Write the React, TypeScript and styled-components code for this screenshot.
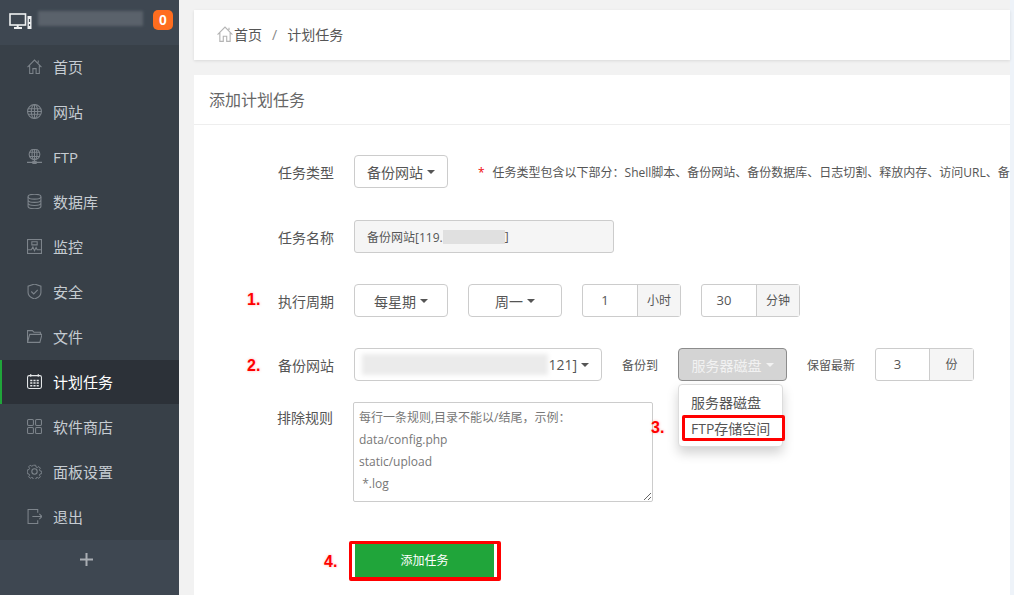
import React from 'react'
import styled, { createGlobalStyle } from 'styled-components'

const GlobalStyle = createGlobalStyle`
  html, body {
    margin: 0;
    padding: 0;
    height: 100%;
    overflow: hidden;
    background: #f2f2f2;
    font-family: "Open Sans", "Noto Sans CJK SC", sans-serif;
  }
  * { box-sizing: border-box; }
`

const icons: Record<string, React.ReactNode> = {
  home: <path d="M1.500 8.500 8 2l6.500 6.500M3.500 7v7.500h3V10h3v4.500h3V7M11.500 2.500v2" />,
  globe: (
    <>
      <circle cx="8" cy="8" r="6.500" />
      <ellipse cx="8" cy="8" rx="3" ry="6.500" />
      <path d="M8 1.500v13M2 5.500h12M2 10.500h12M1.500 8h13" />
    </>
  ),
  ftp: (
    <>
      <circle cx="8" cy="6" r="5" />
      <ellipse cx="8" cy="6" rx="2.300" ry="5" />
      <path d="M8 1v10M3.500 4h9M3.500 8h9M.5 13.500h15M8 11v2.500" />
      <rect x="6.500" y="12.500" width="3" height="2" fill="#7d848b" />
    </>
  ),
  db: (
    <>
      <ellipse cx="8" cy="3.500" rx="6" ry="2.300" />
      <path d="M2 3.500v9c0 1.300 2.700 2.300 6 2.300s6-1 6-2.300v-9M2 6.500c0 1.300 2.700 2.300 6 2.300s6-1 6-2.300M2 9.500c0 1.300 2.700 2.300 6 2.300s6-1 6-2.300" />
    </>
  ),
  monitor: (
    <>
      <rect x="1.500" y="1.500" width="13" height="13" />
      <path d="M2 11h3l1.500-2.500L8 12l1.500-3 1 2H14M5.500 3.500h5v3h-5z" />
    </>
  ),
  shield: <path d="M8 1 2 3v6c0 3 3 5 6 6 3-1 6-3 6-6V3zM5 8l2.300 2.300L11 6.500" />,
  folder: <path d="M1.500 13.500v-11h4.500l1.500 1.500h6v2M1.500 13.500h11.500l2-7.500H3.500z" />,
  calendar: (
    <>
      <rect x="1.500" y="2.500" width="13" height="12" rx="1.500" />
      <path d="M4.500 1v2.500M11.500 1v2.500" />
      <path d="M4 7h8M4 9.500h8M4 12h8" strokeWidth="1.400" strokeDasharray="2 1" />
    </>
  ),
  grid: (
    <>
      <rect x="1.500" y="1.500" width="5.500" height="5.500" rx="1" />
      <rect x="9" y="1.500" width="5.500" height="5.500" rx="1" />
      <rect x="1.500" y="9" width="5.500" height="5.500" rx="1" />
      <rect x="9" y="9" width="5.500" height="5.500" rx="1" />
    </>
  ),
  gear: (
    <>
      <circle cx="8" cy="8" r="2.500" />
      <path d="m6.800 1.500h2.400l.4 1.800 1.300.6 1.600-1 1.600 1.700-1 1.500.6 1.300 1.800.4v2.400l-1.800.4-.6 1.300 1 1.500-1.600 1.700-1.600-1-1.300.6-.4 1.800H6.800l-.4-1.800-1.300-.6-1.600 1-1.600-1.700 1-1.500-.6-1.300-1.800-.4V6.400l1.800-.4.6-1.300-1-1.500 1.600-1.700 1.600 1 1.300-.6z" transform="translate(.8 .8) scale(.9)" />
    </>
  ),
  logout: <path d="M11 4.500V1.500H2v13h9v-3M6 8h9M12.500 5.500 15 8l-2.500 2.500" />,
}

const menu = [
  { icon: 'home', label: '首页' },
  { icon: 'globe', label: '网站' },
  { icon: 'ftp', label: 'FTP' },
  { icon: 'db', label: '数据库' },
  { icon: 'monitor', label: '监控' },
  { icon: 'shield', label: '安全' },
  { icon: 'folder', label: '文件' },
  { icon: 'calendar', label: '计划任务', active: true },
  { icon: 'grid', label: '软件商店' },
  { icon: 'gear', label: '面板设置' },
  { icon: 'logout', label: '退出' },
]

export default function App() {
  return (
    <>
      <GlobalStyle />
      <Page>
        <Sidebar>
          <SideHeader>
            <svg width="23" height="17" viewBox="0 0 23 17" fill="none" stroke="#eef0f1">
              <rect x="1" y="1" width="15.500" height="11" strokeWidth="1.600" />
              <path d="M5 15h8" strokeWidth="2" />
              <path d="M8.700 12v2" strokeWidth="2" />
              <rect x="18.500" y="3" width="4" height="13" fill="#eef0f1" stroke="none" />
              <path d="M20.500 6v3M20.500 11v2" stroke="#4a525b" strokeWidth="1.200" />
            </svg>
            <BlurName />
            <Badge>0</Badge>
          </SideHeader>
          <Nav>
            {menu.map(item => (
              <NavItem key={item.label} $active={item.active}>
                <NavIcon viewBox="1 1 14 14" $active={item.active}>
                  {icons[item.icon]}
                </NavIcon>
                {item.label}
              </NavItem>
            ))}
          </Nav>
          <SideFooter>
            <svg width="13" height="13" viewBox="0 0 13 13" fill="#a9aeb3">
              <path d="M5.500 0h2v5.500H13v2H7.500V13h-2V7.500H0v-2h5.500z" />
            </svg>
          </SideFooter>
        </Sidebar>
        <Main>
          <Crumbs>
            <svg width="16" height="16" viewBox="1 1 14 14" fill="none" stroke="#b4b4b4">
              {icons.home}
            </svg>
            <CrumbHome>首页</CrumbHome>
            <CrumbSep>/</CrumbSep>
            <span>计划任务</span>
          </Crumbs>
          <Panel>
            <PanelTitle>添加计划任务</PanelTitle>
            <Form>
              <Row>
                <Label>任务类型</Label>
                <Dropdown $w={94}>
                  备份网站<Caret />
                </Dropdown>
                <Note>
                  <Star>*</Star>任务类型包含以下部分：Shell脚本、备份网站、备份数据库、日志切割、释放内存、访问URL、备
                </Note>
              </Row>
              <Row $gap={31}>
                <Label>任务名称</Label>
                <NameField>
                  备份网站[119.<NameBlur />]
                </NameField>
              </Row>
              <Row $gap={31}>
                <Label>执行周期</Label>
                <Dropdown $w={94}>
                  每星期<Caret />
                </Dropdown>
                <Dropdown $w={94} $ml={20}>
                  周一<Caret />
                </Dropdown>
                <InputGroup $ml={20}>
                  <GroupValue $w={55}>1</GroupValue>
                  <GroupAddon $w={44}>小时</GroupAddon>
                </InputGroup>
                <InputGroup $ml={20}>
                  <GroupValue $w={55}>30</GroupValue>
                  <GroupAddon $w={44}>分钟</GroupAddon>
                </InputGroup>
                <Mark $left={-107} $top={6}>1.</Mark>
              </Row>
              <Row>
                <Label>备份网站</Label>
                <SiteSelect>
                  <SiteBlur />
                  121]<Caret />
                </SiteSelect>
                <InlineLabel $ml={20} $w={56}>备份到</InlineLabel>
                <StoreWrap>
                  <Dropdown $w={109} $open>
                    服务器磁盘<Caret $light />
                  </Dropdown>
                  <Menu>
                    <MenuItem>服务器磁盘</MenuItem>
                    <MenuItem $marked>FTP存储空间</MenuItem>
                  </Menu>
                  <Mark $left={-27} $top={70}>3.</Mark>
                </StoreWrap>
                <InlineLabel $ml={20} $w={68}>保留最新</InlineLabel>
                <InputGroup>
                  <GroupValue $w={54}>3</GroupValue>
                  <GroupAddon $w={45}>份</GroupAddon>
                </InputGroup>
                <Mark $left={-107} $top={8}>2.</Mark>
              </Row>
              <TextRow>
                <TextLabel>排除规则</TextLabel>
                <Rules
                  readOnly
                  value={'每行一条规则,目录不能以/结尾，示例：\ndata/config.php\nstatic/upload\n *.log'}
                />
              </TextRow>
              <SubmitRow>
                <Mark $left={-30} $top={11}>4.</Mark>
                <SubmitFrame>
                  <SubmitButton>添加任务</SubmitButton>
                </SubmitFrame>
              </SubmitRow>
            </Form>
          </Panel>
        </Main>
      </Page>
    </>
  )
}

const Page = styled.div`
  display: flex;
  width: 1014px;
  height: 595px;
  overflow: hidden;
  background: #f2f2f2;
`

const Sidebar = styled.aside`
  width: 179px;
  flex: none;
  display: flex;
  flex-direction: column;
  background: #384048;
`

const SideHeader = styled.div`
  height: 45px;
  padding: 13px 6px 0 9px;
  display: flex;
  align-items: flex-start;
  background: #3e4751;
`

const BlurName = styled.div`
  width: 105px;
  height: 15px;
  margin: -2px 0 0 6px;
  background: #5a626b;
  filter: blur(1.5px);
`

const Badge = styled.span`
  width: 20px;
  height: 20px;
  margin: -3px 0 0 10px;
  border-radius: 5px;
  background: #ff6d1f;
  color: #fff;
  font-size: 14px;
  font-weight: 700;
  line-height: 20px;
  text-align: center;
  font-family: "Liberation Sans", sans-serif;
`

const Nav = styled.nav`
  flex: 1;
  display: flex;
  flex-direction: column;
`

const NavItem = styled.div<{ $active?: boolean }>`
  height: 45px;
  flex: none;
  display: flex;
  align-items: center;
  gap: 11px;
  padding: 0 0 2px 27px;
  font-size: 15px;
  color: ${p => (p.$active ? '#ffffff' : '#c6ccd2')};
  background: ${p => (p.$active ? '#2c3138' : 'transparent')};
  box-shadow: ${p => (p.$active ? 'inset 2px 0 0 #20a53a' : 'none')};
  ${p => p.$active && 'height: 44px; margin-bottom: 1px;'}
`

const NavIcon = styled.svg<{ $active?: boolean }>`
  width: 15px;
  height: 15px;
  flex: none;
  fill: none;
  stroke: ${p => (p.$active ? '#e4e6e8' : '#7d848b')};
  stroke-width: 1;
`

const SideFooter = styled.div`
  height: 55px;
  padding: 0 6px 16px 0;
  display: flex;
  align-items: center;
  justify-content: center;
  background: #3e4751;
`

const Main = styled.main`
  flex: 1;
  min-width: 0;
  padding: 10px 4px 0 15px;
  display: flex;
  flex-direction: column;
  gap: 15px;
  background: linear-gradient(to right, #f2f2f2 831px, #eef3f9 831px);
`

const Crumbs = styled.div`
  height: 50px;
  flex: none;
  display: flex;
  align-items: center;
  padding: 0 0 2px 23px;
  background: #fff;
  box-shadow: 0 1px 3px rgba(0, 0, 0, 0.1);
  color: #555;
  font-size: 14px;
`

const CrumbHome = styled.span`
  margin-left: 1px;
`

const CrumbSep = styled.span`
  margin: 0 10px;
  color: #888;
`

const Panel = styled.section`
  flex: 1;
  background: #fff;
`

const PanelTitle = styled.h2`
  height: 50px;
  margin: 0;
  padding-left: 15px;
  border-bottom: 1px solid #eee;
  color: #666;
  font-size: 16px;
  font-weight: 400;
  line-height: 51px;
`

const Form = styled.div`
  padding: 30px 0 0 160px;
  display: flex;
  flex-direction: column;
`

const Row = styled.div<{ $gap?: number }>`
  position: relative;
  height: 33px;
  margin-bottom: ${p => p.$gap ?? 32}px;
  display: flex;
  align-items: center;
  white-space: nowrap;
  font-size: 13px;
  color: #555;
`

const Label = styled.label`
  position: absolute;
  left: -76px;
  width: 60px;
  font-size: 14px;
  color: #555;
`

const Dropdown = styled.div<{ $w: number; $ml?: number; $open?: boolean }>`
  width: ${p => p.$w}px;
  height: 33px;
  flex: none;
  margin-left: ${p => p.$ml ?? 0}px;
  display: flex;
  align-items: center;
  justify-content: center;
  gap: 4px;
  border: 1px solid ${p => (p.$open ? '#8c8c8c' : '#ccc')};
  border-radius: 4px;
  background: ${p => (p.$open ? '#d4d4d4' : '#fff')};
  color: ${p => (p.$open ? '#f2f2f2' : '#555')};
  font-size: 14px;
`

const Caret = styled.i<{ $light?: boolean }>`
  width: 0;
  height: 0;
  border-top: 4px solid ${p => (p.$light ? '#f2f2f2' : '#555')};
  border-left: 4px solid transparent;
  border-right: 4px solid transparent;
`

const Note = styled.span`
  margin-left: 30px;
  font-size: 12px;
  color: #555;
`

const Star = styled.span`
  margin-right: 8px;
  color: #ef0808;
`

const NameField = styled.div`
  width: 260px;
  height: 33px;
  padding-left: 12px;
  display: flex;
  align-items: center;
  border: 1px solid #ccc;
  border-radius: 3px;
  background: #f5f5f5;
  color: #555;
  font-size: 12px;
`

const NameBlur = styled.span`
  width: 62px;
  height: 14px;
  background: #e0e0e0;
`

const InputGroup = styled.div<{ $ml?: number }>`
  height: 33px;
  flex: none;
  margin-left: ${p => p.$ml ?? 0}px;
  display: flex;
  border: 1px solid #ccc;
  border-radius: 3px;
  font-size: 12px;
  line-height: 31px;
  text-align: center;
`

const GroupValue = styled.span<{ $w: number }>`
  width: ${p => p.$w}px;
  padding-right: 10px;
  border-right: 1px solid #ccc;
  font-size: 13px;
`

const GroupAddon = styled.span<{ $w: number }>`
  width: ${p => p.$w - 2}px;
  background: #f5f5f5;
`

const SiteSelect = styled.div`
  width: 248px;
  height: 33px;
  flex: none;
  padding-right: 12px;
  display: flex;
  align-items: center;
  justify-content: flex-end;
  gap: 4px;
  border: 1px solid #ccc;
  border-radius: 4px;
  background: #fff;
  font-size: 14px;
  color: #555;
`

const SiteBlur = styled.span`
  width: 186px;
  height: 21px;
  margin-right: -4px;
  background: #ebebeb;
  filter: blur(2px);
`

const InlineLabel = styled.span<{ $ml: number; $w: number }>`
  width: ${p => p.$w}px;
  flex: none;
  margin-left: ${p => p.$ml}px;
  font-size: 12px;
`

const StoreWrap = styled.div`
  position: relative;
  flex: none;
`

const Menu = styled.div`
  position: absolute;
  left: 0;
  top: 36px;
  width: 105px;
  height: 63px;
  padding-top: 5px;
  border: 1px solid #ddd;
  border-radius: 4px;
  background: #fff;
  box-shadow: 0 6px 12px rgba(0, 0, 0, 0.18);
  z-index: 2;
`

const MenuItem = styled.div<{ $marked?: boolean }>`
  position: relative;
  height: 26px;
  padding-left: 12px;
  font-size: 14px;
  line-height: 26px;
  color: #555;

  ${p =>
    p.$marked &&
    `&::after {
      content: '';
      position: absolute;
      box-sizing: border-box;
      left: 3px;
      top: -1px;
      width: 103px;
      height: 26px;
      border: 3px solid #ff0000;
      border-radius: 2px;
    }`}
`

const Mark = styled.span<{ $left: number; $top: number }>`
  position: absolute;
  left: ${p => p.$left}px;
  top: ${p => p.$top}px;
  color: #ff0000;
  font-family: "Liberation Sans", sans-serif;
  font-size: 16px;
  font-weight: 700;
  line-height: 20px;
  text-shadow: 0 0 3px rgba(255, 0, 0, 0.3);
  z-index: 3;
`

const TextRow = styled.div`
  position: relative;
  margin: -11px 0 0 -1px;
`

const TextLabel = styled(Label)`
  left: -76px;
  top: 5px;
`

const Rules = styled.textarea`
  display: block;
  width: 300px;
  height: 100px;
  padding: 4px 5px;
  border: 1px solid #ccc;
  border-radius: 2px;
  outline: none;
  color: #777;
  font-family: "Open Sans", "Noto Sans CJK SC", sans-serif;
  font-size: 12px;
  line-height: 22px;
`

const SubmitRow = styled.div`
  position: relative;
  margin-top: 39px;
  display: flex;
`

const SubmitFrame = styled.div`
  width: 152px;
  height: 40px;
  margin-left: -5px;
  padding: 0 3px 0 3px;
  border: solid #ff0000;
  border-width: 3px 4px 4px 3px;
  border-radius: 2px;
  background: #fff;
  display: flex;
`

const SubmitButton = styled.div`
  flex: 1;
  background: #20a53a;
  color: #fff;
  font-size: 12px;
  line-height: 34px;
  text-align: center;
`
